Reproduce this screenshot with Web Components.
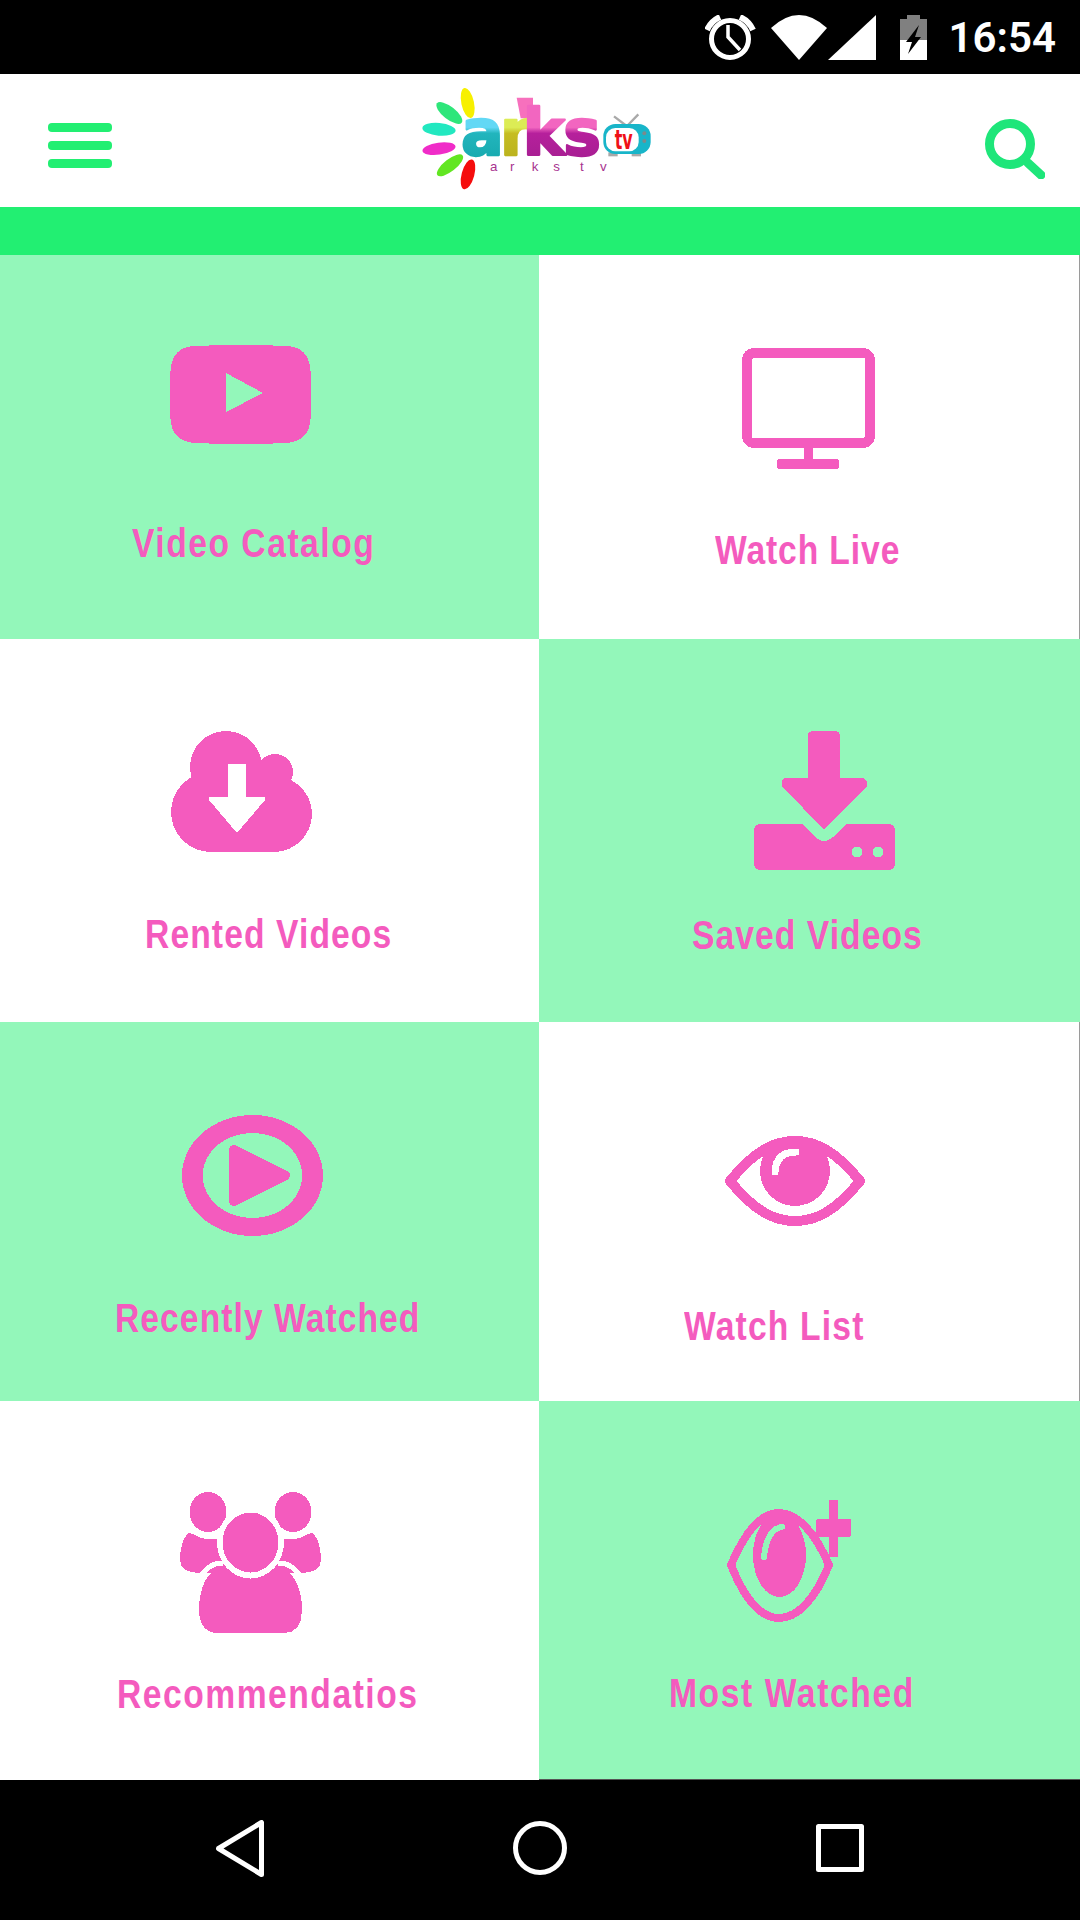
<!DOCTYPE html>
<html lang="en">
<head>
<meta charset="utf-8">
<title>arks tv</title>
<style>
  html, body { margin: 0; padding: 0; background: #000; }
  body { width: 1080px; height: 1920px; overflow: hidden; }
</style>
</head>
<body>
<home-screen></home-screen>

<script>
const ICONS = {
  youtube: `<svg width="141" height="99" viewBox="0 0 141 99"><path fill-rule="evenodd" d="M24 1Q70 -1 117 1Q139 2 140.500 26Q141.500 50 140.500 74Q139 96 117 98Q70 100 24 98Q2 96 .5 74Q-.5 50 .5 26Q2 2 24 1ZM56 28V67L93 48Z"/></svg>`,
  monitor: `<svg width="133" height="121" viewBox="0 0 133 121"><rect x="5" y="5" width="123" height="90" rx="7" fill="none" stroke="var(--pink)" stroke-width="10"/><rect x="62" y="99" width="9" height="14"/><rect x="35" y="111" width="62" height="10" rx="3"/></svg>`,
  cloud: `<svg width="141" height="121" viewBox="0 0 141 121"><circle cx="55" cy="36" r="36"/><circle cx="104" cy="41" r="18"/><circle cx="40" cy="81" r="40"/><circle cx="103" cy="83" r="38"/><rect x="40" y="36" width="63" height="85"/><path fill="#fff" d="M57 33H75V66H93Q95 67 94 69L66 102L38 69Q37 67 39 66H57Z"/></svg>`,
  tray: `<svg width="141" height="139" viewBox="0 0 141 139"><path d="M59 0H81Q86 0 86 5V47H108Q114 48 113 55L70 99L28 55Q26 48 32 47H54V5Q54 0 59 0Z"/><path fill-rule="evenodd" d="M7 93H49L61 106Q70 114 79 106L93 93H134Q141 93 141 100V132Q141 139 134 139H7Q0 139 0 132V100Q0 93 7 93ZM103 115.500A5.500 5.500 0 1 0 103 126.500A5.500 5.500 0 1 0 103 115.500ZM124 115.500A5.500 5.500 0 1 0 124 126.500A5.500 5.500 0 1 0 124 115.500Z"/></svg>`,
  replay: `<svg width="141" height="121" viewBox="0 0 141 121"><path fill-rule="evenodd" d="M0 60.500A70.500 60.500 0 1 0 141 60.500A70.500 60.500 0 1 0 0 60.500ZM20.700 60.500A49.700 42.500 0 1 1 120.100 60.500A49.700 42.500 0 1 1 20.700 60.500Z"/><path d="M52 35V86L103 60.500Z" stroke="var(--pink)" stroke-width="10" stroke-linejoin="round"/></svg>`,
  eye: `<svg width="140" height="90" viewBox="0 0 140 90"><path d="M5 45C30 14 50 5 70 5C90 5 110 14 135 45C110 76 90 85 70 85C50 85 30 76 5 45Z" fill="none" stroke="var(--pink)" stroke-width="10" stroke-linejoin="round"/><circle cx="70" cy="35" r="35"/><path d="M71 16Q51 16 50 36" fill="none" stroke="#fff" stroke-width="7" stroke-linecap="round"/></svg>`,
  people: `<svg width="141" height="141" viewBox="0 0 141 141"><path d="M9 41C2 45 0 60 0 68C0 78 8 81 22 81H50V47H30Z"/><path d="M132 41C139 45 141 60 141 68C141 78 133 81 119 81H91V47H111Z"/><ellipse cx="28" cy="20" rx="24" ry="27" fill="#fff"/><ellipse cx="113" cy="20" rx="24" ry="27" fill="#fff"/><ellipse cx="28" cy="20" rx="18.500" ry="20"/><ellipse cx="113" cy="20" rx="18.500" ry="20"/><path d="M43 76C28 76 19 95 19 118C19 133 26 141 38 141H104C116 141 122 133 122 118C122 95 112 76 98 76Z"/><path d="M43 71C24 71 13 90 14 118" fill="none" stroke="#fff" stroke-width="5"/><path d="M98 71C117 71 128 90 127 118" fill="none" stroke="#fff" stroke-width="5"/><ellipse cx="70.500" cy="50.500" rx="33.500" ry="36" fill="#fff"/><ellipse cx="70.500" cy="50.500" rx="28" ry="30"/></svg>`,
  eyeplus: `<svg width="124" height="122" viewBox="0 0 124 122"><path d="M4 65C18 32 34 13 52 13C70 13 88 32 102 65C88 100 70 118 52 118C34 118 18 100 4 65Z" fill="none" stroke="var(--pink)" stroke-width="8" stroke-linejoin="round"/><ellipse cx="52.500" cy="55" rx="26.500" ry="42"/><path d="M55 27Q40 29 37 57" fill="none" stroke="var(--tile)" stroke-width="6" stroke-linecap="round"/><rect x="102" y="0" width="9" height="57"/><rect x="89" y="19" width="35" height="18" rx="2"/></svg>`
}

class StatusBar extends HTMLElement {
  constructor() {
    super()
    this.attachShadow({ mode: 'open' })
    this.shadowRoot.innerHTML = `
      <style>
        :host {
          display: flex;
          justify-content: flex-end;
          height: 74px;
          padding: 15px 24px 0 0;
          box-sizing: border-box;
          background: #000;
        }
        svg { display: block; flex: none; }
        .wifi { margin-left: 15px; }
        .signal { margin-left: 1px; }
        .battery { margin-left: 24px; }
        .time {
          margin-left: 22px;
          color: #fff;
          font: 600 42px/46px Roboto, sans-serif;
        }
      </style>
      <svg width="51" height="45" viewBox="0 0 51 45" fill="none" stroke="#fff">
        <circle cx="25" cy="24" r="18.500" stroke-width="5"/>
        <path d="M2 15Q6 6 15 2M48 15Q44 6 35 2" stroke-width="6"/>
        <path d="M23 10V22L35 35" stroke-width="3.500"/>
      </svg>
      <svg class="wifi" width="56" height="45" viewBox="0 0 56 45"><path fill="#fff" d="M0 13Q28 -13 56 13L28 45Z"/></svg>
      <svg class="signal" width="48" height="45" viewBox="0 0 48 45"><path fill="#fff" d="M0 45H48V0Z"/></svg>
      <svg class="battery" width="27" height="45" viewBox="0 0 27 45">
        <path fill="#808080" d="M7 0H20V4H27V25H0V4H7Z"/>
        <rect y="25" width="27" height="20" fill="#fff"/>
        <path fill="#000" d="M19 10L6 27H12L8 39L21 22H15Z"/>
      </svg>
      <span class="time"><slot></slot></span>
    `
  }
}
customElements.define('status-bar', StatusBar)

class ArksLogo extends HTMLElement {
  constructor() {
    super()
    this.attachShadow({ mode: 'open' })
    this.shadowRoot.innerHTML = `
      <style>
        :host { display: block; width: 270px; height: 125px; }
        svg { display: block; }
        text { font-family: "DejaVu Sans", sans-serif; font-weight: 700; }
        .small { font-family: "Liberation Sans", sans-serif; font-weight: 400; }
      </style>
      <svg width="270" height="125" viewBox="0 0 810 375">
        <defs>
          <linearGradient id="la" x1="0" y1="0" x2="0" y2="1"><stop offset=".42" stop-color="#62d8f5"/><stop offset=".5" stop-color="#22b5bd"/><stop offset="1" stop-color="#12a5a8"/></linearGradient>
          <linearGradient id="lr" x1="0" y1="0" x2="0" y2="1"><stop offset=".42" stop-color="#dcec55"/><stop offset=".5" stop-color="#c6bd22"/><stop offset="1" stop-color="#b5ad1c"/></linearGradient>
          <linearGradient id="lk" x1="0" y1="0" x2="0" y2="1"><stop offset=".42" stop-color="#f266c0"/><stop offset=".5" stop-color="#b6209c"/><stop offset="1" stop-color="#a01e8e"/></linearGradient>
        </defs>
        <ellipse cx="203" cy="84" rx="19" ry="46" fill="#f7f000" transform="rotate(-12 203 84)"/>
        <ellipse cx="148" cy="114" rx="47" ry="19" fill="#2ee67a" transform="rotate(38 148 114)"/>
        <ellipse cx="117" cy="163" rx="50" ry="19" fill="#22e8c0" transform="rotate(5 117 163)"/>
        <ellipse cx="117" cy="221" rx="50" ry="18" fill="#f02cc8" transform="rotate(-8 117 221)"/>
        <ellipse cx="150" cy="271" rx="48" ry="18" fill="#62e622" transform="rotate(-38 150 271)"/>
        <ellipse cx="204" cy="298" rx="19" ry="46" fill="#f50d0d" transform="rotate(15 204 298)"/>
        <path d="M350 68H399V130H362Z" fill="#f770bd"/>
        <text y="241" font-size="190" stroke-width="7" stroke-linejoin="round">
          <tspan x="183" fill="url(#la)" stroke="url(#la)">a</tspan><tspan x="300" fill="url(#lr)" stroke="url(#lr)">r</tspan><tspan x="368" fill="url(#lk)" stroke="url(#lk)">k</tspan><tspan x="490" fill="url(#lk)" stroke="url(#lk)">s</tspan>
        </text>
        <text class="small" x="270 330 395 460 500 540 600" y="288" font-size="40" fill="#a8338f">arks tv</text>
        <path d="M642 124L676 150M715 118L684 150" stroke="#a9a9a9" stroke-width="7" fill="none"/>
        <rect x="625" y="232" width="28" height="12" fill="#a9a9a9"/><rect x="695" y="232" width="28" height="12" fill="#a9a9a9"/>
        <rect x="610" y="147" width="142" height="90" rx="36" fill="#18b5c9"/>
        <rect x="618" y="159" width="98" height="70" rx="28" fill="#fff"/>
        <circle cx="733" cy="175" r="6" fill="#7b8a8c"/><circle cx="733" cy="198" r="6" fill="#7b8a8c"/>
        <text x="644" y="222" font-size="78" textLength="54" lengthAdjust="spacingAndGlyphs" fill="#ef1118">tv</text>
      </svg>
    `
  }
}
customElements.define('arks-logo', ArksLogo)

class AppHeader extends HTMLElement {
  constructor() {
    super()
    this.attachShadow({ mode: 'open' })
    this.shadowRoot.innerHTML = `
      <style>
        :host {
          display: flex;
          align-items: flex-start;
          height: 133px;
          padding-left: 48px;
          background: #fff;
        }
        .burger {
          display: flex;
          flex-direction: column;
          gap: 9px;
          width: 64px;
          margin-top: 49px;
        }
        .burger i { display: block; height: 9px; border-radius: 4px; background: #22ef72; }
        arks-logo { margin: 1px 0 0 288px; }
        svg { display: block; margin: 45px 0 0 315px; }
      </style>
      <div class="burger"><i></i><i></i><i></i></div>
      <arks-logo></arks-logo>
      <svg width="60" height="60" viewBox="0 0 60 60" fill="none" stroke="#1ee67a">
        <circle cx="25" cy="25" r="20.500" stroke-width="9"/>
        <path d="M43 44L56 56" stroke-width="9" stroke-linecap="round"/>
      </svg>
    `
  }
}
customElements.define('app-header', AppHeader)

class MenuTile extends HTMLElement {
  constructor() {
    super()
    this.attachShadow({ mode: 'open' })
    this.shadowRoot.innerHTML = `
      <style>
        :host {
          --pink: #f45bbe;
          display: block;
          box-sizing: border-box;
          overflow: hidden;
          background: var(--tile);
        }
        .icon {
          margin: var(--iy) 0 0 var(--ix);
          fill: var(--pink);
          line-height: 0;
        }
        .icon svg { display: block; shape-rendering: crispEdges; overflow: visible; }
        /* no narrow face is installed, so the label is squeezed by hand */
        .label {
          width: max-content;
          margin: var(--gap) 0 0 var(--lx);
          color: var(--pink);
          font: 700 41px/44px "Liberation Sans", sans-serif;
          letter-spacing: var(--ls, 0);
          white-space: nowrap;
          transform: scaleX(.82);
          transform-origin: 0 0;
        }
      </style>
      <div class="icon"></div>
      <div class="label"><slot></slot></div>
    `
  }

  connectedCallback() {
    this.shadowRoot.querySelector('.icon').innerHTML = ICONS[this.getAttribute('icon')]
  }
}
customElements.define('menu-tile', MenuTile)

class NavBar extends HTMLElement {
  constructor() {
    super()
    this.attachShadow({ mode: 'open' })
    this.shadowRoot.innerHTML = `
      <style>
        :host {
          display: grid;
          grid-template-columns: repeat(3, 300px);
          justify-content: center;
          justify-items: center;
          align-items: center;
          height: 140px;
          padding-bottom: 4px;
          box-sizing: border-box;
          background: #000;
        }
        svg { display: block; }
      </style>
      <svg width="48" height="57" viewBox="0 0 48 57" fill="none" stroke="#fff" stroke-width="5" stroke-linejoin="round"><path d="M45.500 2.500V54.500L2.500 28.500Z"/></svg>
      <svg width="54" height="54" viewBox="0 0 54 54" fill="none" stroke="#fff" stroke-width="5"><circle cx="27" cy="27" r="24.500"/></svg>
      <svg width="48" height="48" viewBox="0 0 48 48" fill="none" stroke="#fff" stroke-width="5" stroke-linejoin="round"><rect x="2.500" y="2.500" width="43" height="43"/></svg>
    `
  }
}
customElements.define('nav-bar', NavBar)

class HomeScreen extends HTMLElement {
  constructor() {
    super()
    this.attachShadow({ mode: 'open' })
    this.shadowRoot.innerHTML = `
      <style>
        :host {
          display: block;
          width: 1080px;
          height: 1920px;
          --mint: #93f7ba;
        }
        .strip { height: 48px; background: #22ef72; }
        .grid {
          display: grid;
          grid-template-columns: 539px 541px;
          grid-template-rows: 384px 383px 379px 379px;
          height: 1525px;
        }
        .mint { --tile: var(--mint); }
        .white { --tile: #fff; }
        .right.white { border-right: 1px solid #9a9a9a; }
        .last { border-bottom: 1px solid #555; }
      </style>
      <status-bar>16:54</status-bar>
      <app-header></app-header>
      <div class="strip"></div>
      <div class="grid">
        <menu-tile class="mint" icon="youtube" style="--ix:170px;--iy:90px;--lx:132px;--gap:77px;--ls:1.85px">Video Catalog</menu-tile>
        <menu-tile class="white right" icon="monitor" style="--ix:203px;--iy:93px;--lx:176px;--gap:59px;--ls:1.1px">Watch Live</menu-tile>
        <menu-tile class="white" icon="cloud" style="--ix:171px;--iy:92px;--lx:145px;--gap:60px;--ls:1.35px">Rented Videos</menu-tile>
        <menu-tile class="mint right" icon="tray" style="--ix:215px;--iy:92px;--lx:153px;--gap:43px;--ls:1.3px">Saved Videos</menu-tile>
        <menu-tile class="mint" icon="replay" style="--ix:182px;--iy:93px;--lx:115px;--gap:60px;--ls:1.3px">Recently Watched</menu-tile>
        <menu-tile class="white right" icon="eye" style="--ix:186px;--iy:114px;--lx:145px;--gap:78px;--ls:1.45px">Watch List</menu-tile>
        <menu-tile class="white" icon="people" style="--ix:180px;--iy:91px;--lx:117px;--gap:39px;--ls:1.85px">Recommendatios</menu-tile>
        <menu-tile class="mint right last" icon="eyeplus" style="--ix:188px;--iy:99px;--lx:130px;--gap:49px;--ls:1.95px">Most Watched</menu-tile>
      </div>
      <nav-bar></nav-bar>
    `
  }
}
customElements.define('home-screen', HomeScreen)
</script>
</body>
</html>
